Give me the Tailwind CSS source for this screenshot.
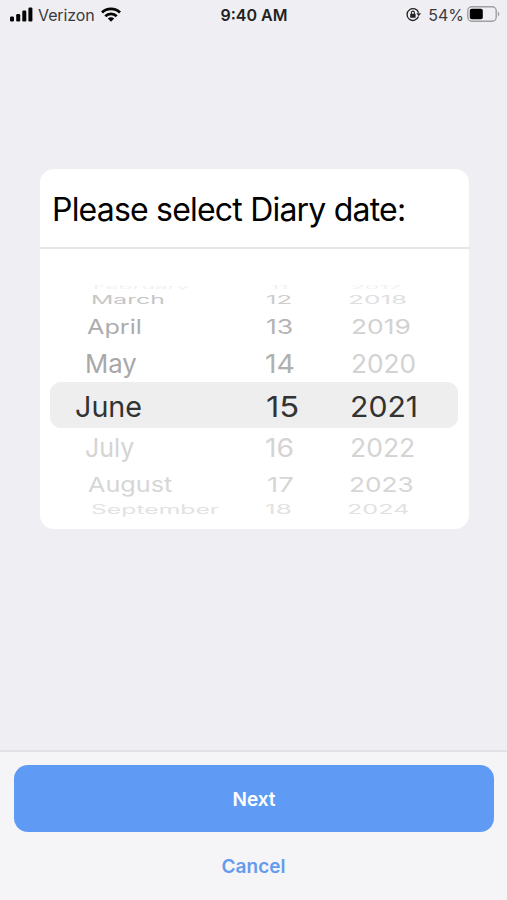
<!DOCTYPE html>
<html lang="en">
<head>
  <meta charset="UTF-8" />
  <title>Select Diary Date</title>
  <script src="https://cdn.jsdelivr.net/npm/@tailwindcss/browser@4"></script>
</head>
<body class="w-[507px] h-[900px] overflow-hidden bg-[#efeef3] font-['Inter',sans-serif] flex flex-col">

  <!-- Status Bar -->
  <header class="h-[30px] shrink-0 grid grid-cols-3 items-center pl-[10px] pr-[7px] text-[#222] text-[16px]">
    <div class="flex items-center">
      <svg class="w-[23px] h-[15px] mr-[5px] -mt-[2px]" viewBox="0 0 23 15" fill="#050505">
        <rect x="0" y="9.5" width="4" height="5" rx="1.2" />
        <rect x="6.2" y="7" width="4" height="7.5" rx="1.2" />
        <rect x="12.3" y="3.5" width="4" height="11" rx="1.2" />
        <rect x="18.4" y="0.5" width="4" height="14" rx="1.2" />
      </svg>
      <span class="text-[#3a3a3c] tracking-[-0.1px]">Verizon</span>
      <svg class="w-[20px] h-[15px] ml-[6px] -mt-[2px]" viewBox="0 0 20 15" fill="none" stroke="#050505" stroke-width="2.8">
        <path d="M1 5.6a12.8 12.8 0 0 1 18 0" />
        <path d="M4.3 9.2a8.2 8.2 0 0 1 11.4 0" />
        <path d="M10 14.8l-3.2-3.3a4.6 4.6 0 0 1 6.4 0z" fill="#050505" stroke="none" />
      </svg>
    </div>
    <span class="text-center font-semibold -ml-[2px]">9:40 AM</span>
    <div class="flex items-center justify-end">
      <!-- Rotation lock -->
      <svg class="w-[15px] h-[15px] mr-[7px] -mt-[1px]" viewBox="0 0 15 15" fill="none" stroke="#222" stroke-width="1.3">
        <path d="M12.5 9.6a5.9 5.9 0 1 1 .1-3.8" />
        <path d="M10.4 6.2h4.6l-2.3 3z" fill="#222" stroke="none" />
        <rect x="4.2" y="6.8" width="5.4" height="4" rx=".6" fill="#222" stroke="none" />
        <path d="M5.4 7V5.6a1.5 1.5 0 0 1 3 0V7" stroke-width="1.1" />
      </svg>
      <span class="text-[#3a3a3c]">54%</span>
      <svg class="w-[33px] h-[16px] ml-[3px] -mt-[2px]" viewBox="0 0 33 16">
        <rect x=".8" y=".8" width="28.4" height="14.4" rx="4" fill="none" stroke="#a0a0a3" stroke-width="1.4" />
        <rect x="2.8" y="2.8" width="13" height="10.4" rx="2" fill="#000" />
        <path d="M30.8 5.5c2 .8 2 4.2 0 5z" fill="#a0a0a3" />
      </svg>
    </div>
  </header>

  <!-- Date Card -->
  <main class="flex-1 pt-[139px] pl-[40px]">
    <div class="w-[429px] h-[360px] bg-white rounded-[14px]">
      <div class="h-[80px] border-b-2 border-[#e6e6e8] pl-[12px] pt-[4px] flex items-center">
        <h1 class="text-[32px] tracking-[-0.8px] text-black whitespace-nowrap">Please select Diary date:</h1>
      </div>

      <!-- Picker wheel, rows flatten away from the middle -->
      <div class="pt-[35px] px-[10px] leading-none whitespace-nowrap">
        <div class="h-[7px] grid grid-cols-[217px_84px_1fr] items-center text-[6px] text-[#f1f1f1]">
          <span class="ml-[43px] w-max origin-left scale-x-[3.8] scale-y-[0.7]">February</span>
          <span class="ml-[3px] w-max origin-left scale-x-[3.8] scale-y-[0.7]">11</span>
          <span class="w-max origin-left scale-x-[3.8] scale-y-[0.7]">2017</span>
        </div>
        <div class="h-[18px] grid grid-cols-[217px_84px_1fr] items-center text-[24px] leading-[18px]">
          <span class="ml-[41px] w-max origin-left scale-x-[1.03] scale-y-[0.5] text-[#c6c6c6]">March</span>
          <span class="-ml-[1px] w-max origin-left scale-x-[1.07] scale-y-[0.5] text-[#cdcdcd]">12</span>
          <span class="-ml-[3px] w-max origin-left scale-x-[1.09] scale-y-[0.5] text-[#e0e0e0]">2018</span>
        </div>
        <div class="h-[36px] grid grid-cols-[217px_84px_1fr] items-center text-[24px]">
          <span class="ml-[37px] w-max origin-left scale-x-[1.05] scale-y-[0.84] text-[#acacac]">April</span>
          <span class="-ml-[1px] w-max origin-left scale-x-[1.11] scale-y-[0.84] text-[#b4b4b4]">13</span>
          <span class="w-max origin-left scale-x-[1.1] scale-y-[0.84] text-[#d2d2d2]">2019</span>
        </div>
        <div class="h-[37px] grid grid-cols-[217px_84px_1fr] items-center text-[26px]">
          <span class="ml-[35px] w-max origin-left scale-x-[0.99] text-[#a8a8a8]">May</span>
          <span class="-ml-[2px] w-max origin-left scale-x-[1.09] text-[#b0b0b0]">14</span>
          <span class="w-max origin-left scale-x-[1.01] text-[#d2d2d2]">2020</span>
        </div>
        <div class="h-[46px] w-[408px] rounded-[11px] bg-[#eeeeee] grid grid-cols-[217px_84px_1fr] items-center pt-[2px] text-[29px] text-[#333]">
          <span class="ml-[25px] w-max origin-left scale-x-[0.99]">June</span>
          <span class="-ml-[1px] w-max origin-left scale-x-[1.13]">15</span>
          <span class="-ml-[1px] w-max origin-left scale-x-[1.04]">2021</span>
        </div>
        <div class="h-[40px] grid grid-cols-[217px_84px_1fr] items-center text-[26px] text-[#d4d4d4]">
          <span class="ml-[35px] w-max origin-left scale-x-[0.96]">July</span>
          <span class="-ml-[2px] w-max origin-left scale-x-[1.09]">16</span>
          <span class="-ml-[1px] w-max origin-left scale-x-[1.02]">2022</span>
        </div>
        <div class="h-[34px] grid grid-cols-[217px_84px_1fr] items-center text-[25px] text-[#d6d6d6]">
          <span class="ml-[38px] w-max origin-left scale-x-[1.01] scale-y-[0.82]">August</span>
          <span class="w-max origin-left scale-x-[1.1] scale-y-[0.82]">17</span>
          <span class="-ml-[2px] w-max origin-left scale-x-[1.05] scale-y-[0.82]">2023</span>
        </div>
        <div class="h-[16px] grid grid-cols-[217px_84px_1fr] items-center text-[24px] leading-[16px] text-[#e2e2e2]">
          <span class="ml-[41px] w-max origin-left scale-x-[1.03] scale-y-[0.53]">September</span>
          <span class="-ml-[2px] w-max origin-left scale-x-[1.09] scale-y-[0.53]">18</span>
          <span class="-ml-[4px] w-max origin-left scale-x-[1.05] scale-y-[0.53]">2024</span>
        </div>
      </div>
    </div>
  </main>

  <!-- Bottom Actions -->
  <footer class="h-[150px] shrink-0 bg-[#f5f5f8] border-t-2 border-[#e2e2e5] pt-[13px] pl-[14px] flex flex-col">
    <button class="h-[67px] w-[480px] shrink-0 rounded-[14px] bg-[#5f9bf5] text-white text-[19px] font-semibold pt-[3px]">Next</button>
    <button class="h-[67px] w-[479px] shrink-0 text-[#659bed] text-[19px] font-semibold pt-[4px]">Cancel</button>
  </footer>

</body>
</html>
